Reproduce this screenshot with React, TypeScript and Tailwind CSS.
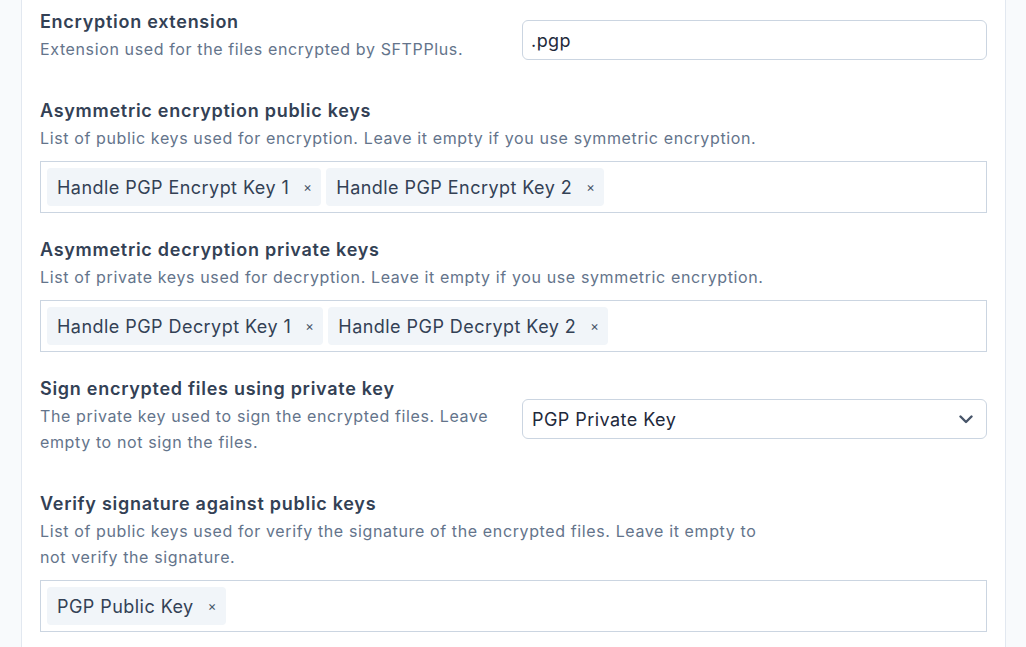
import React from "react";

const font = { fontFamily: "Inter, 'Noto Sans', sans-serif" };

function Tag({ label }: { label: string }) {
  return (
    <div className="flex h-[38px] items-center rounded-[4px] bg-[#f1f5f9] pl-[10px] pr-[9px] text-[18px] tracking-[0.45px] text-[#334155]">
      <span>{label}</span>
      <span className="ml-[14px] text-[13px] leading-none text-[#475569]">×</span>
    </div>
  );
}

function TagBox({ tags }: { tags: string[] }) {
  return (
    <div className="mt-[10px] flex flex-wrap gap-[5px] border border-[#cbd5e1] bg-white p-[6px]">
      {tags.map((t) => (
        <Tag key={t} label={t} />
      ))}
    </div>
  );
}

function Label({ children }: { children: React.ReactNode }) {
  return <div className="text-[18px] font-semibold leading-7 tracking-[0.72px] text-[#334155]">{children}</div>;
}

function Desc({ children, className = "" }: { children: React.ReactNode; className?: string }) {
  return <div className={"text-base leading-[26px] tracking-[0.62px] text-[#64748b] " + className}>{children}</div>;
}

export default function App() {
  return (
    <div className="min-h-[647px] w-full bg-[#f8fafc] pl-[21px] pr-[20px]" style={font}>
      <div className="min-h-[647px] border-x border-[#e2e8f0] bg-white px-[18px] pt-2">
        <div className="flex flex-col gap-[23px]">
          {/* Encryption extension */}
          <div className="grid grid-cols-[1fr_465px] items-center gap-6">
            <div className="pb-3">
              <Label>Encryption extension</Label>
              <Desc>Extension used for the files encrypted by SFTPPlus.</Desc>
            </div>
            <div className="mb-[2px] flex h-10 items-center rounded-md border border-[#cbd5e1] bg-white px-2 text-[18px] tracking-[0.45px] text-[#1e293b]">
              .pgp
            </div>
          </div>

          {/* Asymmetric encryption public keys */}
          <div>
            <Label>Asymmetric encryption public keys</Label>
            <Desc>List of public keys used for encryption. Leave it empty if you use symmetric encryption.</Desc>
            <TagBox tags={["Handle PGP Encrypt Key 1", "Handle PGP Encrypt Key 2"]} />
          </div>

          {/* Asymmetric decryption private keys */}
          <div>
            <Label>Asymmetric decryption private keys</Label>
            <Desc>List of private keys used for decryption. Leave it empty if you use symmetric encryption.</Desc>
            <TagBox tags={["Handle PGP Decrypt Key 1", "Handle PGP Decrypt Key 2"]} />
          </div>

          {/* Sign encrypted files */}
          <div className="grid grid-cols-[1fr_465px] items-center gap-6">
            <div className="pb-3">
              <Label>Sign encrypted files using private key</Label>
              <Desc>The private key used to sign the encrypted files. Leave empty to not sign the files.</Desc>
            </div>
            <div className="mb-[4px] flex h-10 items-center justify-between rounded-md border border-[#cbd5e1] bg-white pl-[9px] pr-[13px] text-[18px] tracking-[0.45px] text-[#1e293b]">
              <span>PGP Private Key</span>
              <svg width="14" height="10" viewBox="0 0 14 10" fill="none">
                <path d="M1.5 2.5 L7 8 L12.5 2.5" stroke="#475569" strokeWidth="2.4" strokeLinecap="round" strokeLinejoin="round" />
              </svg>
            </div>
          </div>

          {/* Verify signature */}
          <div>
            <Label>Verify signature against public keys</Label>
            <Desc className="max-w-[735px]">
              List of public keys used for verify the signature of the encrypted files. Leave it empty to not verify the signature.
            </Desc>
            <TagBox tags={["PGP Public Key"]} />
          </div>
        </div>
      </div>
    </div>
  );
}
